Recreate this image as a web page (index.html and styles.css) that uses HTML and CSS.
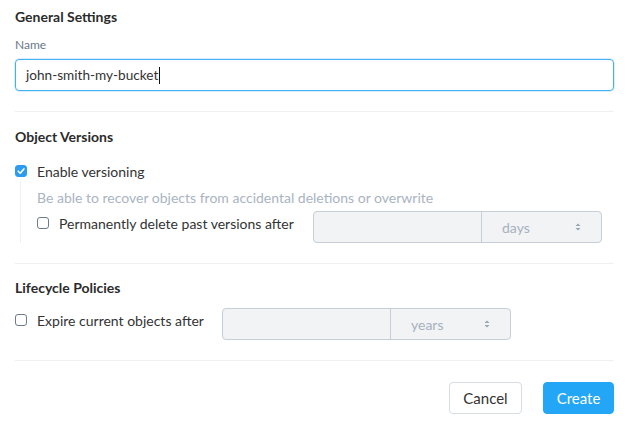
FILE: index.html
```html
<!DOCTYPE html>
<html>
<head>
<meta charset="utf-8">
<link rel="stylesheet" href="styles.css">
</head>
<body>
<div class="page">
  <section class="section first">
    <h2 class="title">General Settings</h2>
    <div class="label">Name</div>
    <div class="text-input">john-smith-my-bucket<span class="caret"></span></div>
  </section>

  <section class="section">
    <h2 class="title">Object Versions</h2>
    <div class="check-row">
      <span class="checkbox checked">
        <svg width="12" height="12" viewBox="0 0 12 12"><path d="M3.2 6.2 L5.2 8.2 L8.9 3.9" fill="none" stroke="#fff" stroke-width="1.6" stroke-linecap="round" stroke-linejoin="round"/></svg>
      </span>
      <span class="check-label">Enable versioning</span>
    </div>
    <div class="nested">
      <div class="help">Be able to recover objects from accidental deletions or overwrite</div>
      <div class="option-row">
        <div class="check-row inline wide">
          <span class="checkbox"></span>
          <span class="check-label">Permanently delete past versions after</span>
        </div>
        <div class="group">
          <div class="group-num"></div>
          <div class="group-select"><span>days</span>
            <svg class="arrows" width="6" height="8" viewBox="0 0 6 8"><path d="M3 0.5 L5.5 3 L0.5 3 Z M3 7.5 L5.5 5 L0.5 5 Z" fill="#9aa5b3"/></svg>
          </div>
        </div>
      </div>
    </div>
  </section>

  <section class="section last">
    <h2 class="title">Lifecycle Policies</h2>
    <div class="option-row">
      <div class="check-row inline narrow">
        <span class="checkbox"></span>
        <span class="check-label">Expire current objects after</span>
      </div>
      <div class="group">
        <div class="group-num"></div>
        <div class="group-select"><span>years</span>
          <svg class="arrows" width="6" height="8" viewBox="0 0 6 8"><path d="M3 0.5 L5.5 3 L0.5 3 Z M3 7.5 L5.5 5 L0.5 5 Z" fill="#9aa5b3"/></svg>
        </div>
      </div>
    </div>
  </section>

  <div class="actions">
    <button class="btn cancel">Cancel</button>
    <button class="btn create">Create</button>
  </div>
</div>
</body>
</html>
```

FILE: styles.css
```css
* { box-sizing: border-box; }
html, body { margin: 0; padding: 0; background: #fff; }
body {
  font-family: "Lato", "Open Sans", sans-serif;
  color: #333;
  font-size: 14px;
}
.page {
  padding: 0 14px 0 15px;
}
.section {
  border-bottom: 1px solid #eef0f2;
  padding: 15px 0 20px;
}
.section.first { padding-top: 7px; }
.section.last { padding-top: 14px; }
.title {
  margin: 0;
  font-size: 14px;
  line-height: 20px;
  font-weight: 700;
  color: #2b2b2b;
}
.label {
  margin-top: 10px;
  font-size: 12px;
  line-height: 16px;
  color: #6a7889;
}
.text-input {
  margin-top: 6px;
  height: 32px;
  border: 1px solid #45b1f5;
  border-radius: 4px;
  padding: 0 10px;
  display: flex;
  align-items: center;
  font-size: 13.6px;
  color: #333;
  box-shadow: 0 0 0 0.5px rgba(69,177,245,0.4);
}
.caret {
  display: inline-block;
  width: 1px;
  height: 17px;
  background: #111;
  margin-left: 1px;
}
.check-row {
  margin-top: 14px;
  display: flex;
  align-items: center;
  height: 20px;
}
.check-row.inline { margin-top: 2px; }
.check-row.wide { width: 276px; }
.check-row.narrow { width: 207px; }
.checkbox {
  width: 12px;
  height: 12px;
  border: 1.4px solid #6e7b8b;
  border-radius: 3px;
  margin-right: 10px;
  display: inline-flex;
  align-items: center;
  justify-content: center;
  flex: none;
}
.checkbox.checked {
  background: #2c9cf0;
  border-color: #2c9cf0;
}
.checkbox.checked svg { display: block; margin: -1px; }
.check-label {
  font-size: 14px;
  color: #333;
}
.nested {
  margin-left: 5px;
  border-left: 1px solid #eef0f2;
  padding-left: 16px;
  padding-top: 8px;
}
.help {
  font-size: 14px;
  line-height: 18px;
  color: #a9b4c2;
}
.option-row {
  display: flex;
  justify-content: flex-start;
  align-items: flex-start;
  margin-top: 10px;
}
.nested .option-row { margin-top: 4px; }
.group {
  width: 289px;
  height: 32px;
  display: flex;
  border: 1px solid #c6ced7;
  border-radius: 4px;
  background: #f1f3f5;
  overflow: hidden;
}
.group-num {
  width: 168px;
  border-right: 1px solid #c6ced7;
}
.group-select {
  flex: 1;
  display: flex;
  align-items: center;
  padding-left: 20px;
  padding-right: 20px;
  color: #a7b1bd;
  font-size: 14px;
  justify-content: space-between;
}
.actions {
  display: flex;
  justify-content: flex-end;
  gap: 21px;
  padding-top: 21px;
}
.btn {
  height: 32px;
  border-radius: 4px;
  font-family: "Lato", "Open Sans", sans-serif;
  font-size: 15px;
  padding: 0;
}
.cancel {
  width: 73px;
  background: #fff;
  border: 1px solid #d8dde3;
  color: #333;
}
.create {
  width: 71px;
  background: #22a6f5;
  border: 1px solid #22a6f5;
  color: #fff;
}
```
